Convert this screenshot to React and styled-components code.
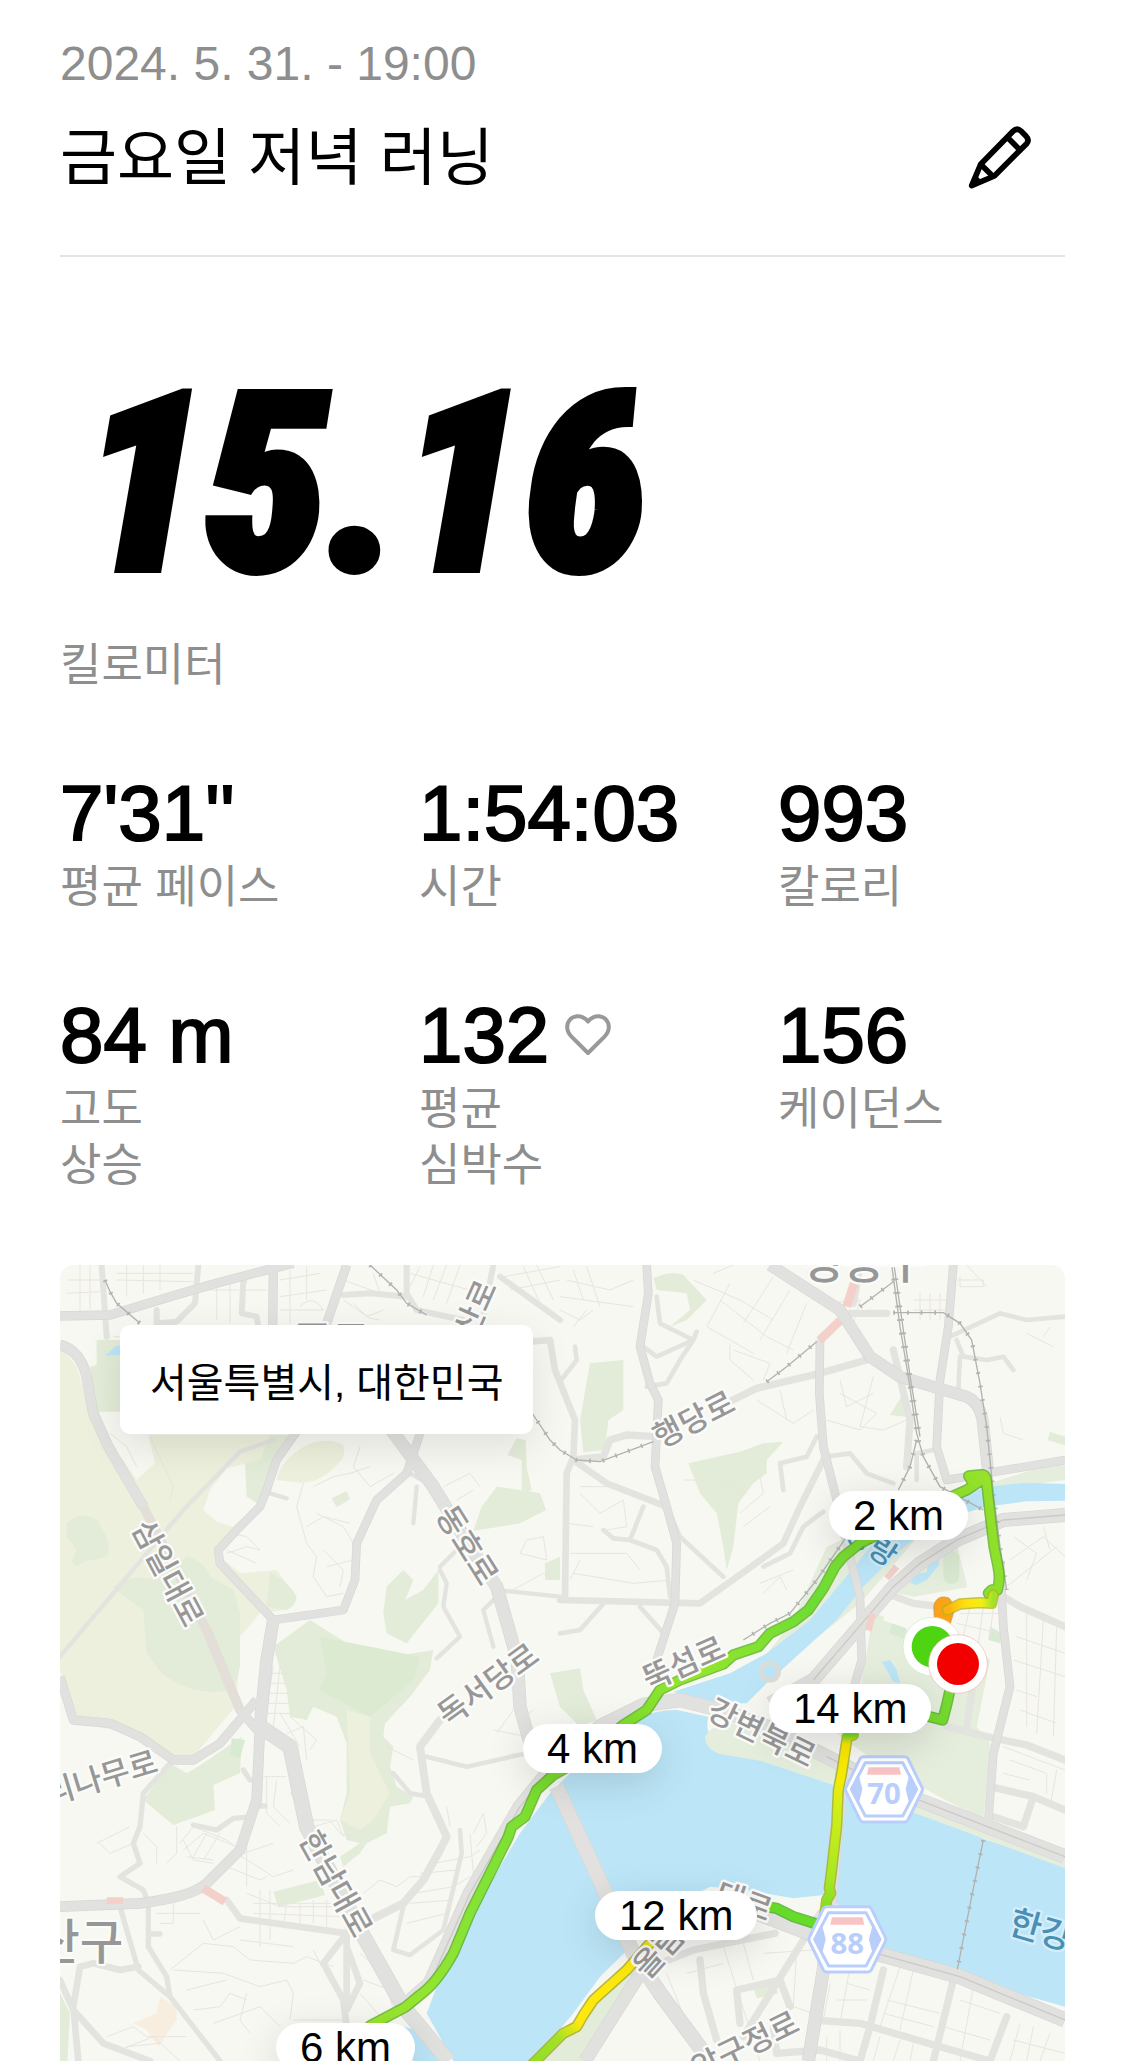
import React from "react";
import styled, { createGlobalStyle } from "styled-components";

const sans = `"Liberation Sans", Arial, "Noto Sans CJK KR", sans-serif`;
const korean = `"Noto Sans CJK KR", "Liberation Sans", sans-serif`;

const GlobalStyle = createGlobalStyle`
  *, *::before, *::after { box-sizing: border-box; }
  body { margin: 0; background: #fff; color: #000; font-family: ${sans}; }
  h1, p, dl, dd { margin: 0; }
`;

const Page = styled.main`
  padding: 36px 60px 0;
`;

const Header = styled.header`
  display: flex;
  align-items: flex-end;
  justify-content: space-between;
  height: 221px;
  padding: 0 33px 52px 0;
  border-bottom: 2px solid #e4e4e4;
`;

const Heading = styled.div`
  display: flex;
  flex-direction: column;
  gap: 23px;
`;

const DateText = styled.time`
  font: 400 48px/56px ${sans};
  color: #8e8e8e;
`;

const Title = styled.h1`
  font: 400 62px/88px ${sans};
`;

const IconButton = styled.button`
  display: flex;
  margin-bottom: 14px;
  padding: 0;
  border: 0;
  background: none;
  color: #000;
  cursor: pointer;
`;

const Distance = styled.section`
  display: flex;
  flex-direction: column;
  gap: 21px;
  padding: 96px 0 0;
`;

const DistanceValue = styled.p`
  padding-left: 22px;
  font: italic 900 248px/264px "Roboto Condensed", Roboto, ${sans};
  -webkit-text-stroke: 8px #000;
`;

const Label = styled.p`
  font: 400 45px/56px ${sans};
  color: #8e8e8e;
`;

const Stats = styled.dl`
  display: grid;
  grid-template-columns: repeat(3, 1fr);
  column-gap: 72px;
  row-gap: 75px;
  padding: 75px 0 71px;
`;

const Stat = styled.div`
  display: flex;
  flex-direction: column-reverse;
  justify-content: flex-end;
  gap: 3px;
`;

const StatValue = styled.dd`
  display: flex;
  align-items: center;
  gap: 16px;
  font: 400 78px/88px ${sans};
  -webkit-text-stroke: 2px #000;
  white-space: nowrap;
`;

const StatLabel = styled(Label).attrs({ as: "dt" })`
  white-space: pre-line;
`;

const MapPanel = styled.section`
  position: relative;
  aspect-ratio: 1005 / 796;
  overflow: hidden;
  border-radius: 14px 14px 0 0;
  background: #f7f8f2;
`;

const MapDrawing = styled.svg`
  display: block;
  width: 100%;
  height: 100%;
`;

const Place = styled.p`
  position: absolute;
  top: 60px;
  left: 60px;
  padding: 28px 30px 21px;
  border-radius: 10px;
  background: #fff;
  box-shadow: 0 12px 40px rgba(0, 0, 0, 0.1);
  font: 400 40px/60px ${sans};
`;

const Pill = styled.span`
  position: absolute;
  left: ${(p) => (p.$x / 1005) * 100}%;
  top: ${(p) => (p.$y / 796) * 100}%;
  padding: 0 24px;
  border-radius: 25px;
  background: #fff;
  box-shadow: 0 10px 40px rgba(0, 0, 0, 0.14);
  font: 400 42px/49px ${sans};
  white-space: nowrap;
`;

const RoadName = styled.text`
  font: 500 ${(p) => p.$size || 94}px ${korean};
  fill: ${(p) => p.$color || "#979797"};
  stroke: ${(p) => p.$halo || "#fbfbf9"};
  stroke-width: 14px;
  stroke-linejoin: round;
  paint-order: stroke;
  text-anchor: middle;
  dominant-baseline: central;
`;

const ShieldNumber = styled.text`
  font: 700 88px "Open Sans", ${sans};
  fill: #b9cefb;
  text-anchor: middle;
`;

const stats = [
  { value: "7'31''", label: "평균 페이스" },
  { value: "1:54:03", label: "시간" },
  { value: "993", label: "칼로리" },
  { value: "84 m", label: "고도\n상승" },
  { value: "132", label: "평균\n심박수", heart: true },
  { value: "156", label: "케이던스" },
];

const pills = [
  { text: "2 km", x: 769, y: 226 },
  { text: "4 km", x: 463, y: 459 },
  { text: "6 km", x: 216, y: 758 },
  { text: "12 km", x: 535, y: 626 },
  { text: "14 km", x: 709, y: 419 },
];

const hills = [
  "M0 255L50 320 90 450 130 540 190 600 230 660 285 610 265 525H720L650 600 620 690 590 735 560 610 500 625 450 690 430 750 470 785 520 800 470 880 540 940 650 930 700 1000 680 1050 600 1060 540 1130 540 1200 525 1340 400 1490 330 1490 200 1420 50 1385 0 1230Z",
  "M650 660Q660 600 740 555 800 530 850 555 860 590 830 615 780 670 720 668Z",
];

const greens = [
  "M20 790Q60 750 110 780 160 850 140 890L70 905 50 920 35 905 50 870 20 830Z",
  "M160 980Q220 940 290 960L380 890Q430 900 450 950L520 990 540 1060 540 1220 520 1290Q400 1310 320 1250L305 1240 260 1180 250 1050 180 1000Z",
  "M110 240L180 240 180 455 115 455 90 320 110 315Z",
  "M630 525L700 525 640 600 620 690 600 735 560 710 555 610 600 600Z",
  "M630 935Q690 970 710 1010 705 1040 680 1050L620 1040Z",
  "M1265 740L1310 680 1380 690 1440 700 1458 750 1380 790 1320 800 1240 812Z",
  "M1342 585L1370 535 1397 540 1400 620 1415 690 1385 700 1385 600Z",
  "M980 980L1030 930 1060 960 1035 1020 1090 990 1135 930 1135 1030 1040 1150 980 1120 970 1060Z",
  "M815 715L860 693 870 718 830 742Z",
  "M640 1160L680 1290 690 1370 740 1380 760 1340 830 1370 860 1450 860 1600 840 1680 860 1740 900 1750 840 1790 850 1820 900 1780 920 1750 980 1720 990 1640 1050 1630 1060 1610 1010 1580 990 1520 1000 1460 970 1430 975 1390 1050 1310 1110 1230 1120 1170 940 1200 750 1080Z",
  "M250 1620L330 1510 380 1540 430 1510 545 1430 540 1540 460 1575 465 1650 340 1695Z",
  "M640 1895L780 1860 795 1905 655 1942Z",
  "M1590 310L1690 300 1690 450 1645 480 1635 570 1570 577 1560 480Z",
  "M1780 55Q1830 30 1870 45L1940 120 1880 180 1830 200 1890 150 1880 100 1790 90Z",
  "M1885 610L2040 575 2110 550 2170 545 2120 600 2120 640 2080 670 2035 730 2020 860 2000 930 1990 860 1970 760 1920 700Z",
  "M2490 465L2530 400 2538 470Z",
  "M2970 515L3015 530V556L2963 540Z",
  "M1455 910L1500 890V960H1455Z",
  "M1470 1240L1560 1225 1570 1290 1610 1380 1560 1400 1500 1340Z",
  "M1410 2403L1680 2150 1730 2130 1590 2403Z",
  "M0 2200L30 2260 22 2403H0Z",
  "M2080 2185L2140 2170 2155 2200 2090 2215Z",
];

const parks = [
  "M2300 860L2560 740 3015 600V660L2790 690 2600 800 2400 1030 2150 1230 2060 1260 2200 1080Z",
  "M2470 990L2600 880 2690 850 2722 982 2560 1010Z",
  "M2440 1060L2600 1110 2720 1130 2790 1200 2750 1400 2790 1450 2770 1680 2620 1600 2440 1500 2330 1420 2400 1290Z",
];

const spit =
  "M1935 1430Q1950 1400 2000 1390L2120 1400 2320 1490 3015 1790V1825L2580 1665 2320 1575 2100 1502 1980 1482Q1935 1465 1935 1430Z";

const water = [
  "M1100 2260L1130 2180 1200 2050 1290 1870 1380 1720 1470 1600 1540 1530 1690 1400Q1760 1350 1850 1350L1945 1370Q1930 1430 1990 1475L2100 1490 2250 1535 2320 1565 2580 1655 2780 1740 3015 1815V2240L2840 2190 2690 2130 2480 2070 2345 1990 2330 1930 2290 1905 2200 1915 2060 1890 1950 1880 1700 2010 1712 2060 1620 2150 1540 2260 1420 2403H1180Z",
  "M1030 2300L1070 2310 1150 2403H1060Z",
  "M1840 1295L2010 1240 2120 1180 2250 1080 2350 960 2440 850 2540 760 2700 700 2800 678 2900 668 3015 672V722L2900 724 2780 740 2640 780 2520 870 2410 980 2330 1080 2220 1180 2120 1270 2060 1330 1960 1330Z",
  "M2550 970L2565 945 2600 935 2605 905 2635 885 2637 915 2600 960 2570 975Z",
  "M2465 1205L2490 1200 2510 1230 2520 1270 2500 1265 2480 1230Z",
  "M135 287L165 260 180 255V285Z",
];

const majorRoads = [
  { w: 32, d: "M0 255Q60 270 80 350L100 460 145 560 250 740" },
  { w: 28, d: "M0 168L150 165 330 110 450 75 600 35 700 10M640 15L638 220M860 15L790 220" },
  { w: 26, d: "M720 500L650 600 620 690 600 740 530 810 475 870 480 910 640 1080 850 1050 885 960 890 850 950 720 1040 640 1080 520" },
  { w: 40, d: "M980 490L1120 680 1230 860 1310 980 1350 1120 1372 1200 1380 1340 1410 1450" },
  { w: 38, d: "M640 1080L620 1200 600 1400" },
  { w: 46, d: "M600 1400L690 1460 740 1700 900 2010 1030 2240 1165 2403" },
  { w: 32, d: "M600 1400L590 1620 540 1770 440 1870Q400 1910 240 1930L0 1940" },
  { w: 28, d: "M0 1250L40 1380 150 1390 240 1430 340 1500 400 1500 480 1450 590 1320M440 1110L540 1350 600 1420" },
  { w: 26, d: "M1760 15L1765 100 1740 260 1770 370 1795 420 1785 620 1820 740 1850 850 1845 1030 1790 1200" },
  { w: 36, d: "M2130 15L2340 150 2430 290 2520 350 2620 380 2720 410Q2765 430 2770 500L2785 640" },
  { w: 26, d: "M2280 240L2278 400 2290 560 2330 720 2360 850 2400 1010 2405 1200 2380 1290M2680 15L2665 200 2640 360 2630 560 2660 660 3015 600" },
  { w: 42, d: "M3015 765L2830 780 2690 840 2580 910 2500 980 2380 1120 2260 1260 2130 1330" },
  { w: 44, d: "M1030 2240L1110 2170 1230 1900 1380 1640 1470 1530 1620 1400 1750 1335 1860 1320 1980 1350 2120 1400 2300 1490 2500 1590 2680 1660 3015 1790" },
  { w: 46, d: "M2080 1955L2250 2020 2450 2080 2700 2150 3015 2280" },
  { w: 46, d: "M1490 1580L1720 2080 1800 2200 1950 2403" },
  { w: 40, d: "M1575 2403L1760 2110M2290 2130L2245 2403M2350 1500L2290 2130" },
  { w: 26, d: "M2820 900L2830 1100 2850 1280 2800 1480 2785 1680" },
];

const minorRoads = [
  { w: 18, d: "M125 15L140 230M415 15L405 130 350 185 290 190V150M550 60L545 160 590 170 595 200M850 105L930 100 1040 110M1300 15L1260 220M1040 15L1040 100 1070 150 1210 180M1320 50L1500 180" },
  { w: 20, d: "M1410 245L1470 240 1485 330 1545 480 1540 590 1520 640 1515 1010M1540 600L1640 670 1820 740M1500 1020L1920 1030 2060 930 2170 850 2220 740 2290 600" },
  { w: 22, d: "M2000 430L2090 385 2280 340 2420 300M1790 530L1700 525 1650 540 1630 590 1540 600M2370 160H2480M2380 130L2400 15M2500 270L2550 480 2540 620" },
  { w: 14, d: "M1790 110L1800 190 1900 240 1860 300 1820 370 1760 380M1900 240L1910 215M1750 260L1790 290 1900 240M2270 530L2240 590 2160 610 2170 690M2300 590L2370 580 2420 640 2500 670M1500 365L1550 300 1545 260M1630 810L1660 835 1710 840 1790 870 1820 920 1830 1010M1750 740L1710 840M1820 740L1860 830 1990 950M2110 920L2190 880 2230 800 2290 755" },
  { w: 14, d: "M2670 230L2820 160 2900 180 3015 170M2690 240L2710 290 2780 300 2830 290 2860 330M2700 290L2695 390M2570 660L2570 580 2620 570M1640 1020L1560 1110 1500 1120M1740 1040L1810 1120" },
  { w: 13, d: "M640 540L540 575 370 750 0 1190M630 700L680 715M1050 640L1140 690M1070 680L1060 790M1140 930L1160 970 1150 1040 1200 1130 1130 1195M1310 990L1500 1010M1310 1010L1270 1050 1300 1160M1140 920L1200 860" },
  { w: 16, d: "M330 1510L250 1600 240 1700 220 1750 240 1810 180 1850 250 1890 265 1930 265 2060 320 2150 330 2210 480 2403M265 2022H300M180 1940L235 2130 330 2210M400 1695L470 1710 520 1675 580 1670M590 1638H615M550 1530L570 1560M725 1580L700 1600" },
  { w: 20, d: "M500 1920L540 1975 860 2020 790 2110 850 2220 860 2300M860 2020V2250L900 2170 860 2060M0 2160L40 2250 130 2350 270 2403M40 2240L60 2120 100 2110 180 2130 235 2120M40 2240L55 2403" },
  { w: 24, d: "M1140 1380L1080 1460 1100 1600 1160 1730 1140 1770 1090 1860 1030 1930 940 1975" },
  { w: 14, d: "M1100 1490L1220 1520 1400 1480M1000 1540L1050 1600 1110 1610M1200 1710L1205 1780 1150 2010 1050 2085 1000 2070 1030 1940" },
  { w: 22, d: "M2830 1010L2880 1040 3015 1100M2660 1400L2780 1430 2900 1455 3015 1500M2790 1580L2920 1610 3015 1650M2920 1610L2890 1700 2800 1670M2750 1200L2720 1400M2480 1000L2560 1030 2640 1040" },
  { w: 22, d: "M1800 2110L1900 2070 2145 2020M1920 2100L1930 2200 1970 2340M2040 2290L2030 2190 2160 2160 2190 2240M2470 2130L2430 2300 2400 2403M2680 2160L2620 2403M2840 2270L2790 2403M2260 2280L2400 2290 2640 2360 2790 2403M2140 2300L2150 2380 2280 2370 2400 2403M2280 1960L2050 2330" },
];

const lanes =
  "M20 60H130M20 100L120 95M60 15V160M90 15V150M170 40H400M170 60L400 65M200 15V110M250 15V100M300 15V90M160 230H260M440 90H620M470 60V180M510 50V190M560 40V70M660 60L780 40M660 110L800 90M690 30V190M740 20V120M660 150H790M720 140Q760 100 790 150M850 60L960 100 940 40M880 130L920 170 970 150M850 120L930 175 960 180M1050 40L1300 110M1080 20L1050 80M1120 15L1090 110M1160 15L1120 120M1200 15L1160 130M1330 50L1500 20M1350 90L1500 60M1390 20L1440 130M1430 15L1480 120M1300 250L1380 230 1400 260M1250 190L1280 240" +
  "M730 670L710 740 740 850 770 890 760 950 800 1010 850 1000M760 680L820 650 870 640 930 620M900 560L880 620 930 680 1000 640M770 760L850 800 880 850M740 800L790 770 870 790M790 870L850 930 840 980M800 920L880 900M500 880L560 860 600 870 560 830 510 820M500 870L590 910M1150 680L1230 640 1260 680M1190 720L1240 690M1400 840L1450 830 1460 900 1380 880ZM1340 1000L1450 940 1480 960M150 520L200 560 230 620M270 530L340 680 330 720" +
  "M1520 60L1650 90 1720 60M1540 30L1570 120M1580 20L1620 140M1500 110L1720 140M1500 150L1560 180 1600 150M1540 200L1580 150M1900 60L2040 120 2140 180M1960 40L2020 15M1980 120L2120 230 2200 270M2010 70L1940 200 2080 280M2140 50L2050 190M2190 90L2100 240M2240 130L2180 280M2020 270L2130 310 2110 360M2010 250V300L2080 360M2300 130L2400 120 2380 190M2090 420L2200 490 2260 450M2160 390L2180 480M2340 360L2360 440 2440 400M2340 400L2450 460 2400 510 2300 480M2440 350L2400 500 2470 510 2540 480M2560 120H2660M2560 150H2660M2580 100V180M2610 100V180M2640 100V180M2690 60H2770V80H2700V50M2720 15L2780 80M2900 220L2980 260M2950 230L2970 200M2820 470L2830 520 2890 540" +
  "M1560 680H1640M1560 700L1620 760 1690 720 1700 800 1640 810M1520 790L1600 800M1530 880H1700L1740 930M1540 940L1720 970 1830 960M1560 900L1530 960M1870 660L1990 660 2060 700M2040 760L2110 700 2100 650M2050 800L2130 740M2100 970L2200 930M2110 1000L2160 950 2180 990" +
  "M2860 830L2930 880 2900 960M2850 900L2950 830 3015 890M2840 980L2990 860M2950 800L2970 870M2700 1060H2820M2690 1090L2820 1120M2730 1040L2710 1130M2770 1040L2750 1190M2800 1040L2790 1130M2870 1130L3015 1180M2860 1200L3015 1250M2900 1050V1400M2950 1080L2930 1420M2990 1100L2980 1430M2870 1290L2930 1310M2880 1350L2990 1390M2830 1460L3015 1530M2850 1500L2960 1540V1600M2990 1530L2970 1640M2830 1540L2910 1560" +
  "M640 1220L610 1400M660 1220L640 1400M630 1240H680M630 1270H690M625 1300H690M620 1330H690M615 1360H700M660 1360L720 1460M690 1370L770 1440 750 1470M680 1420L730 1400 740 1500M610 1550H680M620 1550V1660L660 1700M650 1560L640 1640 690 1690M750 1680H810L840 1720 880 1730M760 1700L830 1680 850 1730M360 1750L400 1700 500 1740 550 1780M370 1770L430 1720 530 1760M380 1790L460 1800M400 1790L440 1720M430 1800L480 1720M370 1740L400 1800 460 1810M520 1790L640 1750M500 1820L600 1860 620 1850M530 1780L640 1850 700 1830M560 1750L560 1880M110 1750L210 1700M120 1750L150 1780 220 1750M290 1810V1760L250 1720M350 1700L350 1780 320 1810" +
  "M580 1930H820M580 1960L850 1970M560 1900L660 1940 820 1940M600 1890V2060M630 1890V2040M680 1930L670 2000M720 1930V1990M760 1920V1990M800 1920V2000M540 2040L700 2060M290 1960H420M300 1990H340V1930M430 1980L460 2040 540 2000M330 2130L430 2050 520 2060 570 2100 700 2110 740 2090 820 2120M340 2130L490 2140 600 2180 680 2160 700 2200 690 2280M380 2190L500 2160M400 2250L480 2240 510 2200 560 2220M460 2290L600 2240 660 2300M560 2200L540 2280 570 2320M780 2110L760 2070M700 2280H850M900 2080L970 2140 1000 2250M910 2160L990 2190M900 2200L970 2280M140 2330L220 2300 260 2330 380 2330M180 2370L280 2330 360 2403M200 2360L300 2350M860 2000L820 2080" +
  "M910 1900L960 1860 1010 1880 1050 1850 1100 1850M1120 1810L1230 1790 1260 1770M1080 1840L1190 1830M1060 1900L1180 1880 1230 1850M1050 1930L1180 1920M1040 1990L1160 1960M1240 1720L1270 1660 1280 1720 1250 1760M1230 1720L1240 1840M1170 1700L1160 1640M1310 1420L1360 1350M1300 1410L1400 1430M1380 1380L1420 1350M980 1460L1060 1500" +
  "M1990 2060L2100 2403M2050 2050L2080 2160M1820 2140L1880 2290M2110 2080L2260 2070M2210 2070L2200 2240 2260 2260M1880 2140L1990 2110M2310 2170L2290 2280M2370 2120L2340 2290M2360 2170L2430 2190M2330 2220H2420M2520 2120L2460 2300M2560 2130L2520 2310M2480 2220L2640 2260M2470 2260L2620 2300M2700 2220L2820 2260M2740 2180L2700 2403M2650 2300L2790 2340M2880 2290L2850 2403M2920 2300L2900 2403M2970 2320L2940 2403M2860 2340L3015 2380M2300 2330V2403M2340 2310V2403M2460 2330L2440 2403M2520 2340L2500 2403M2560 2350L2550 2403";

const rails = [
  "M135 60L150 95 170 130 240 190",
  "M930 15L1010 90 1040 130 1100 165",
  "M1410 450L1430 480 1470 540 1500 570 1550 600 1620 605 1700 575 1780 545",
  "M2120 365L2180 320 2270 245M2400 140L2500 65",
  "M2495 15L2520 200 2545 350 2570 520 2590 590 2640 680 2770 750",
  "M2502 15L2530 210 2552 360 2580 530",
  "M2500 158H2650L2700 190 2735 240 2760 370 2780 500 2800 700 2820 860 2840 990",
  "M2570 540L2550 620 2515 690",
  "M2360 830L2270 960 2190 1060 2130 1090 2050 1140",
  "M2770 1740L2735 1910 2692 2128",
];

const alerts = [
  { w: 26, d: "M2382 70L2360 140M2340 182L2278 242M430 1885L495 1925" },
  { w: 20, d: "M2510 920L2480 955M2438 1060L2425 1112M140 1922H190" },
];

const routeParts = [
  { id: "north", d: "M2795 1010L2785 1000 2795 990 2812 990Q2822 960 2814 920L2802 860 2790 760 2780 670Q2780 645 2765 644L2726 648 2735 662 2760 664 2720 690 2670 712 2560 770 2400 850 2350 890 2325 920 2290 985 2245 1050 2200 1085 2130 1120 2095 1160 2020 1185 1990 1212 1860 1260 1800 1290 1760 1350 1690 1395 1560 1500 1480 1545 1430 1590 1395 1670 1355 1700 1345 1730 1275 1870 1230 1960 1180 2080Q1130 2170 1080 2205L1035 2242 930 2297", stroke: "url(#pace-north)", edge: "#58b01e" },
  { id: "start", d: "M2640 1110L2637 1040Q2642 1022 2658 1028L2668 1045 2655 1090", stroke: "#fda216", edge: "#e08a18" },
  { id: "turn", d: "M2662 1050L2700 1032 2760 1028 2795 1030 2800 1005", stroke: "url(#pace-turn)", edge: "#b4b41c" },
  { id: "finish", d: "M2600 1368L2648 1380 2660 1335 2670 1290", stroke: "#74dc2e", edge: "#4fac1e" },
  { id: "bridge", d: "M2380 1425L2362 1430 2345 1540 2335 1590 2330 1700 2315 1830 2308 1885 2312 1900 2300 1920 2294 1965", stroke: "url(#pace-bridge)", edge: "#9fb01c" },
  { id: "bank", d: "M2120 1940L2150 1945 2200 1970 2270 1992", stroke: "#66dc2a", edge: "#4bac1e" },
  { id: "south", d: "M1800 2010L1770 2050 1700 2130 1600 2220 1570 2265 1550 2300 1510 2320 1400 2430", stroke: "url(#pace-south)", edge: "#a8a81c" },
];

const names = [
  { text: "삼일대로", x: 330, y: 936, a: 62 },
  { text: "동호로", x: 1228, y: 852, a: 58 },
  { text: "한남대로", x: 834, y: 1868, a: 61 },
  { text: "독서당로", x: 1280, y: 1268, a: -36 },
  { text: "행당로", x: 1898, y: 472, a: -27 },
  { text: "뚝섬로", x: 1868, y: 1203, a: -24 },
  { text: "강변북로", x: 2108, y: 1412, a: 26 },
  { text: "리나무로", x: 122, y: 1546, a: -17 },
  { text: "압구정로", x: 2052, y: 2350, a: -26 },
  { text: "올림", x: 1790, y: 2070, a: -48 },
  { text: "대로", x: 2054, y: 1918, a: 20 },
  { text: "산로", x: 1240, y: 142, a: -66 },
];

const bluename = { $color: "#4a90b4", $halo: "#d3eefa" };

function PencilIcon() {
  return (
    <svg width="64" height="64" viewBox="84 74 192 192" fill="none" stroke="currentColor" strokeWidth="17" strokeLinejoin="round" strokeLinecap="round" aria-hidden="true">
      <path d="M95 256L122 192 219 93Q231 81 243 92L257 106Q270 119 259 131L163 227Z" />
      <path d="M202 111L240 149M122 192L160 229" strokeLinecap="butt" />
      <path d="M108 236L116 244" />
    </svg>
  );
}

function HeartIcon() {
  return (
    <svg width="46" height="42" viewBox="0 0 46 42" fill="none" stroke="#999" strokeWidth="4" strokeLinejoin="round" role="img" aria-label="심박수">
      <path d="M23 7.500C19 2.500 14.500 2 12 2.200 6 2.700 2.200 7.500 2.200 13.200 2.200 17 4 20 6.500 22.600L23 39 39.500 22.600C42 20 43.800 17 43.800 13.200 43.800 7.500 40 2.700 34 2.200 31.500 2 27 2.500 23 7.500Z" />
    </svg>
  );
}

function Shield({ x, y, number }) {
  return (
    <g transform={`translate(${x} ${y})`}>
      <path d="M-62 -98H62Q68 -98 72 -92L114 -6Q117 0 114 6L72 92Q68 98 62 98H-62Q-68 98 -72 92L-114 6Q-117 0 -114 -6L-72 -92Q-68 -98 -62 -98Z" fill="#fff" stroke="#b9cefb" strokeWidth="9" />
      <path d="M-56 -80H56L98 0 56 80H-56L-98 0Z" fill="#fff" stroke="#b9cefb" strokeWidth="9" strokeLinejoin="round" />
      <path d="M-78 -40L-98 0-78 40-68 0ZM78 -40L98 0 78 40 68 0Z" fill="#b9cefb" stroke="#b9cefb" strokeWidth="6" />
      <path d="M-46 -66H46L51 -44H-51Z" fill="#f9c4c4" />
      <ShieldNumber x="0" y="44">{number}</ShieldNumber>
    </g>
  );
}

function RunMap() {
  return (
    <MapDrawing viewBox="0 15 3015 2388" preserveAspectRatio="xMidYMin slice" role="img" aria-label="러닝 경로 지도">
      <defs>
        <linearGradient id="pace-north" gradientUnits="userSpaceOnUse" x1="2800" y1="640" x2="930" y2="2300">
          <stop offset="0" stopColor="#98e22a" />
          <stop offset="0.14" stopColor="#84df2c" />
          <stop offset="0.26" stopColor="#6cdc34" />
          <stop offset="0.42" stopColor="#92e52e" />
          <stop offset="0.6" stopColor="#76dc2a" />
          <stop offset="0.78" stopColor="#82e236" />
          <stop offset="1" stopColor="#9be62c" />
        </linearGradient>
        <linearGradient id="pace-turn" x1="0" x2="1" y1="0" y2="0">
          <stop offset="0" stopColor="#ffb010" />
          <stop offset="0.4" stopColor="#ffe010" />
          <stop offset="0.75" stopColor="#f2ee14" />
          <stop offset="1" stopColor="#a0e228" />
        </linearGradient>
        <linearGradient id="pace-bridge" gradientUnits="userSpaceOnUse" x1="0" x2="0" y1="1425" y2="1965">
          <stop offset="0" stopColor="#70d828" />
          <stop offset="0.05" stopColor="#ffe800" />
          <stop offset="0.26" stopColor="#f4ea08" />
          <stop offset="0.4" stopColor="#d2ee18" />
          <stop offset="0.8" stopColor="#a6e822" />
          <stop offset="1" stopColor="#7cdc26" />
        </linearGradient>
        <linearGradient id="pace-south" gradientUnits="userSpaceOnUse" x1="1400" x2="1800" y1="2420" y2="2010">
          <stop offset="0" stopColor="#8ae028" />
          <stop offset="0.22" stopColor="#a2e224" />
          <stop offset="0.36" stopColor="#ffe80c" />
          <stop offset="0.8" stopColor="#fde90c" />
          <stop offset="1" stopColor="#d8ea18" />
        </linearGradient>
      </defs>

      <rect y="15" width="3015" height="2388" fill="#f7f8f2" />
      <g fill="#edf0dc">{hills.map((d) => <path key={d} d={d} />)}</g>
      <g fill="#e2ecd8">{greens.map((d) => <path key={d} d={d} />)}</g>
      <path d="M780 1130L980 1170 1080 1190 1060 1260 930 1370 780 1290 800 1240Z" fill="#dcead2" />
      <path d="M860 1350L930 1370 930 1480 990 1600 940 1680 900 1710 840 1680 870 1600Z" fill="#edf0dc" />
      <path d="M220 2290L290 2260 300 2210 350 2240 350 2280 295 2360 260 2310Z" fill="#f8eee0" />
      <g fill="#e5eddd">{parks.map((d) => <path key={d} d={d} />)}</g>
      <path d="M2480 1030L2640 1050 2630 1110 2540 1110 2470 1080Z" fill="#f7f8f2" />
      <rect x="2650" y="872" width="48" height="100" rx="24" fill="#d8e8d0" />
      <path d="M515 1435L555 1440 540 1495 510 1485Z" fill="#d8ead2" />
      <path d="M2495 1090L2540 1105 2530 1135 2490 1120ZM2790 1100L2825 1120 2820 1150 2785 1140Z" fill="#d8e9d4" />
      <path d={lanes} fill="none" stroke="#e9e4e0" strokeWidth="3" />

      <g fill="none" stroke="#e3e3e0" strokeLinejoin="round" strokeLinecap="round">
        {minorRoads.map((r) => <path key={r.d} d={r.d} strokeWidth={r.w} />)}
      </g>
      <g fill="#bce6f8">{water.map((d) => <path key={d} d={d} />)}</g>
      <path d={spit} fill="#e5eddd" />
      <g fill="none" strokeLinejoin="round">
        {majorRoads.map((r) => <path key={r.d} d={r.d} stroke="#d8d7d5" strokeWidth={r.w} />)}
        {majorRoads.map((r) => <path key={r.d} d={r.d} stroke="#e1e1df" strokeWidth={r.w - 4} />)}
      </g>
      <path d="M3015 765L2830 780 2690 840 2580 910 2500 980 2380 1120 2260 1260M2300 1490L2500 1590 2680 1660 3015 1790M2250 2020L2450 2080 2700 2150 3015 2280M1030 2240L1110 2170 1230 1900 1380 1640 1470 1530 1620 1400" fill="none" stroke="#cdc9c5" strokeWidth="4" />
      <path d="M1490 1580L1712 2060" fill="none" stroke="#e2e1df" strokeWidth="40" />
      <path d="M250 740L440 1110 540 1350" fill="none" stroke="#e3dfd8" strokeWidth="28" />
      <circle cx="2130" cy="1235" r="26" fill="none" stroke="#dcdcd8" strokeWidth="14" />
      {alerts.map((r) => <path key={r.d} d={r.d} fill="none" stroke="#f3d0c9" strokeWidth={r.w} />)}

      <g fill="none">
        {rails.map((d) => <path key={d} d={d} stroke="#b2b2b0" strokeWidth="4" />)}
        {rails.map((d) => <path key={d} d={d} stroke="#b2b2b0" strokeWidth="13" strokeDasharray="5 36" />)}
      </g>

      <RoadName $size={126} x="815" y="236">중구</RoadName>
      <RoadName $size={136} x="2412" y="-4">성동구</RoadName>
      <RoadName $size={142} x="-6" y="2034">용산구</RoadName>
      <RoadName {...bluename} $size={88} transform="translate(2440 846) rotate(34)">중랑</RoadName>
      <RoadName {...bluename} $size={104} transform="translate(2945 2002) rotate(16)">한강</RoadName>

      <g fill="none" strokeLinecap="round" strokeLinejoin="round">
        {routeParts.map((r) => (
          <g key={r.id}>
            <path d={r.d} stroke={r.edge} strokeOpacity="0.8" strokeWidth="34" />
            <path d={r.d} stroke={r.stroke} strokeWidth="25" />
          </g>
        ))}
      </g>

      {names.map((n) => (
        <RoadName key={n.text} transform={`translate(${n.x} ${n.y}) rotate(${n.a})`}>{n.text}</RoadName>
      ))}

      <Shield x={2472} y={1588} number="70" />
      <Shield x={2362} y={2038} number="88" />

      <circle cx="2617" cy="1160" r="88" fill="#fff" stroke="#c9ecc0" strokeWidth="2" />
      <circle cx="2617" cy="1160" r="62" fill="#4cd510" />
      <circle cx="2694" cy="1212" r="88" fill="#fff" stroke="#f3b4b4" strokeWidth="2" />
      <circle cx="2694" cy="1212" r="63" fill="#f20000" />
    </MapDrawing>
  );
}

export default function App() {
  return (
    <>
      <GlobalStyle />
      <Page>
        <Header>
          <Heading>
            <DateText dateTime="2024-05-31T19:00">2024. 5. 31. - 19:00</DateText>
            <Title>금요일 저녁 러닝</Title>
          </Heading>
          <IconButton type="button" aria-label="제목 편집">
            <PencilIcon />
          </IconButton>
        </Header>

        <Distance>
          <DistanceValue>15.16</DistanceValue>
          <Label>킬로미터</Label>
        </Distance>

        <Stats>
          {stats.map((s) => (
            <Stat key={s.label}>
              <StatLabel>{s.label}</StatLabel>
              <StatValue>
                {s.value}
                {s.heart && <HeartIcon />}
              </StatValue>
            </Stat>
          ))}
        </Stats>

        <MapPanel>
          <RunMap />
          <Place>서울특별시, 대한민국</Place>
          {pills.map((p) => (
            <Pill key={p.text} $x={p.x} $y={p.y}>{p.text}</Pill>
          ))}
        </MapPanel>
      </Page>
    </>
  );
}
